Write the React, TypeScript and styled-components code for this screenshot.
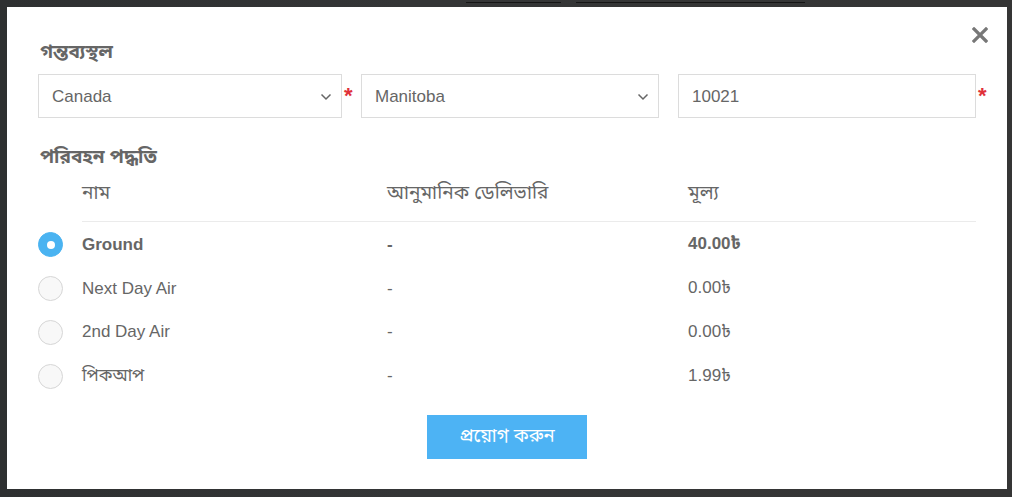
import React, { useState } from "react";
import styled, { createGlobalStyle, css } from "styled-components";

const GlobalStyle = createGlobalStyle`
  html, body {
    margin: 0;
    padding: 0;
    background: #333435;
    font-family: "Liberation Sans", Arial, "Noto Sans Bengali", "Lohit Bengali", sans-serif;
  }
  * { box-sizing: border-box; }
`;

const Backdrop = styled.div`
  position: relative;
  width: 1012px;
  height: 497px;
  background: linear-gradient(90deg, #2e3031 0%, #343536 40%, #353535 100%);
  padding: 7px 5px 8px 7px;
  overflow: hidden;
`;

const BehindLinks = styled.div`
  position: absolute;
  top: 0;
  left: 466px;
  display: flex;
  align-items: flex-start;
  gap: 15px;
`;

const BehindLink = styled.span<{ $w: number }>`
  display: block;
  width: ${(p) => p.$w}px;
  height: 3px;
  border-bottom: 1px solid #151515;
`;

const Modal = styled.div`
  position: relative;
  width: 1000px;
  height: 482px;
  background: #fff;
  padding: 32px 31px 30px 31px;
  display: flex;
  flex-direction: column;
`;

const CloseButton = styled.button`
  position: absolute;
  top: 16px;
  right: 15px;
  width: 24px;
  height: 24px;
  border: 0;
  padding: 0;
  background: transparent;
  display: flex;
  align-items: center;
  justify-content: center;
  cursor: pointer;
`;

const SectionTitle = styled.h3<{ $mt?: number }>`
  margin: ${(p) => p.$mt ?? 0}px 0 0 2px;
  height: 26px;
  line-height: 26px;
  font-size: 19px;
  font-weight: bold;
  color: #666;
`;

const FieldRow = styled.div`
  display: flex;
  margin-top: 9px;
`;

const Field = styled.div`
  display: flex;
  align-items: flex-start;
`;

const Required = styled.span<{ $show?: boolean }>`
  width: 19px;
  padding-left: 2px;
  padding-top: 11px;
  font-size: 22px;
  font-weight: bold;
  line-height: 1;
  color: #e0303a;
  visibility: ${(p) => (p.$show ? "visible" : "hidden")};
`;

const boxBase = css`
  height: 44px;
  border: 1px solid #dcdcdc;
  background: #fff;
  font-family: "Liberation Sans", Arial, sans-serif;
  font-size: 17px;
  color: #666;
  padding: 2px 13px 0;
  display: flex;
  align-items: center;
`;

const SelectBox = styled.div<{ $w: number }>`
  ${boxBase}
  width: ${(p) => p.$w}px;
  justify-content: space-between;
  padding-right: 9px;
`;

const TextBox = styled.div<{ $w: number }>`
  ${boxBase}
  width: ${(p) => p.$w}px;
`;

const Table = styled.div`
  display: grid;
  grid-template-columns: 44px 305px 301px 1fr;
  width: 938px;
`;

const HeadCell = styled.div<{ $blank?: boolean }>`
  height: 52px;
  padding-bottom: 3px;
  display: flex;
  align-items: center;
  font-size: 19px;
  color: #666;
  border-bottom: 1px solid ${(p) => (p.$blank ? "transparent" : "#ebebeb")};
`;

const Cell = styled.div<{ $bold?: boolean }>`
  height: 43.75px;
  padding-top: 2px;
  display: flex;
  align-items: center;
  font-size: 17px;
  color: #666;
  font-weight: ${(p) => (p.$bold ? "bold" : "normal")};
`;

const Radio = styled.span<{ $checked?: boolean }>`
  width: 25px;
  height: 25px;
  border-radius: 50%;
  display: flex;
  align-items: center;
  justify-content: center;
  cursor: pointer;
  ${(p) =>
    p.$checked
      ? css`
          background: #4ab3f1;
          border: 1px solid #4ab3f1;
          &::after {
            content: "";
            width: 8px;
            height: 8px;
            border-radius: 50%;
            background: #fff;
          }
        `
      : css`
          background: #f8f8f8;
          border: 1px solid #d6d6d6;
        `}
`;

const Footer = styled.div`
  display: flex;
  justify-content: center;
  margin-top: 18px;
`;

const ApplyButton = styled.button`
  width: 160px;
  height: 44px;
  border: 0;
  background: #4db3f4;
  color: #fff;
  font-size: 18.5px;
  font-family: "Liberation Sans", Arial, "Noto Sans Bengali", sans-serif;
  cursor: pointer;
`;

const Chevron = () => (
  <svg width="12" height="8" viewBox="0 0 12 8" fill="none">
    <path d="M1.5 1.5 L6 6 L10.5 1.5" stroke="#666" strokeWidth="1.5" />
  </svg>
);

const CloseIcon = () => (
  <svg width="16" height="16" viewBox="0 0 16 16">
    <path d="M2 2 L14 14 M14 2 L2 14" stroke="#777" strokeWidth="3.2" strokeLinecap="square" />
  </svg>
);

const methods = [
  { name: "Ground", est: "-", price: "40.00৳" },
  { name: "Next Day Air", est: "-", price: "0.00৳" },
  { name: "2nd Day Air", est: "-", price: "0.00৳" },
  { name: "পিকআপ", est: "-", price: "1.99৳" },
];

export default function App() {
  const [selected, setSelected] = useState(0);
  return (
    <>
      <GlobalStyle />
      <Backdrop>
        <BehindLinks>
          <BehindLink $w={95} />
          <BehindLink $w={229} />
        </BehindLinks>
        <Modal>
          <CloseButton aria-label="close">
            <CloseIcon />
          </CloseButton>
          <SectionTitle>গন্তব্যস্থল</SectionTitle>
          <FieldRow>
            <Field>
              <SelectBox $w={304}>
                Canada
                <Chevron />
              </SelectBox>
              <Required $show>*</Required>
            </Field>
            <Field>
              <SelectBox $w={298}>
                Manitoba
                <Chevron />
              </SelectBox>
              <Required>*</Required>
            </Field>
            <Field>
              <TextBox $w={298}>10021</TextBox>
              <Required $show>*</Required>
            </Field>
          </FieldRow>
          <SectionTitle $mt={26}>পরিবহন পদ্ধতি</SectionTitle>
          <Table>
            <HeadCell $blank />
            <HeadCell>নাম</HeadCell>
            <HeadCell>আনুমানিক ডেলিভারি</HeadCell>
            <HeadCell>মূল্য</HeadCell>
            {methods.map((m, i) => {
              const on = i === selected;
              return (
                <React.Fragment key={m.name}>
                  <Cell>
                    <Radio $checked={on} onClick={() => setSelected(i)} />
                  </Cell>
                  <Cell $bold={on}>{m.name}</Cell>
                  <Cell $bold={on}>{m.est}</Cell>
                  <Cell $bold={on}>{m.price}</Cell>
                </React.Fragment>
              );
            })}
          </Table>
          <Footer>
            <ApplyButton>প্রয়োগ করুন</ApplyButton>
          </Footer>
        </Modal>
      </Backdrop>
    </>
  );
}
